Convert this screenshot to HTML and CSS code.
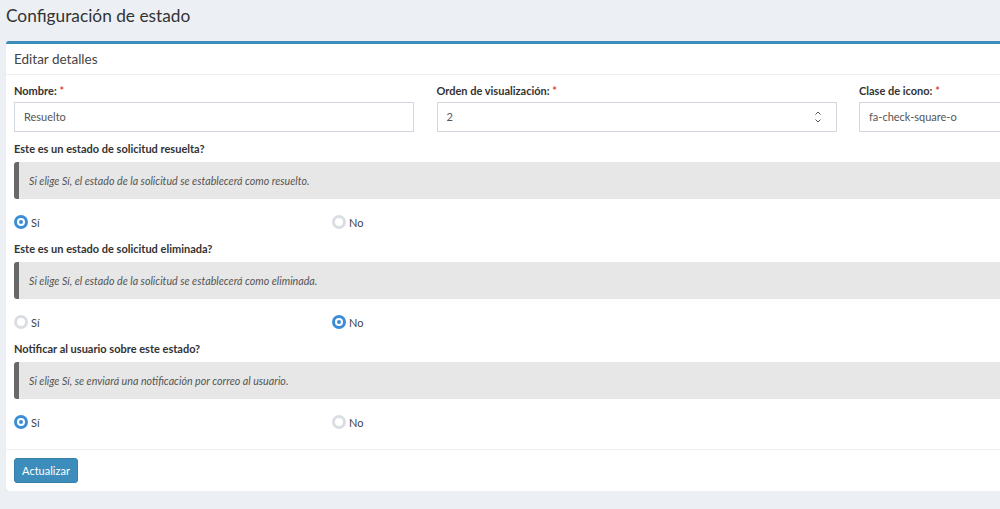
FILE: index.html
```html
<!DOCTYPE html>
<html lang="es">
<head>
<meta charset="utf-8">
<title>Configuración de estado</title>
<link rel="stylesheet" href="styles.css">
</head>
<body>
<div class="page">
  <h1 class="title">Configuración de estado</h1>
  <div class="box">
    <div class="box-header">Editar detalles</div>
    <div class="box-body">
      <div class="fields">
        <div class="field">
          <div class="label">Nombre: <span class="req">*</span></div>
          <div class="input">Resuelto</div>
        </div>
        <div class="field">
          <div class="label">Orden de visualización: <span class="req">*</span></div>
          <div class="input">2
            <svg class="spin" width="8" height="14" viewBox="0 0 8 14"><path d="M1.5 4.5 L4 2 L6.5 4.5 M1.5 9.5 L4 12 L6.5 9.5" fill="none" stroke="#555" stroke-width="1"/></svg>
          </div>
        </div>
        <div class="field">
          <div class="label">Clase de icono: <span class="req">*</span></div>
          <div class="input">fa-check-square-o</div>
        </div>
      </div>

      <div class="section">
        <div class="label">Este es un estado de solicitud resuelta?</div>
        <div class="callout">Si elige Sí, el estado de la solicitud se establecerá como resuelto.</div>
        <div class="radios">
          <div class="radio"><span class="dot on"></span>Sí</div>
          <div class="radio"><span class="dot"></span>No</div>
        </div>
      </div>

      <div class="section">
        <div class="label">Este es un estado de solicitud eliminada?</div>
        <div class="callout">Si elige Sí, el estado de la solicitud se establecerá como eliminada.</div>
        <div class="radios">
          <div class="radio"><span class="dot"></span>Sí</div>
          <div class="radio"><span class="dot on"></span>No</div>
        </div>
      </div>

      <div class="section">
        <div class="label">Notificar al usuario sobre este estado?</div>
        <div class="callout">Si elige Sí, se enviará una notificación por correo al usuario.</div>
        <div class="radios">
          <div class="radio"><span class="dot on"></span>Sí</div>
          <div class="radio"><span class="dot"></span>No</div>
        </div>
      </div>
    </div>
    <div class="box-footer">
      <button class="btn">Actualizar</button>
    </div>
  </div>
</div>
</body>
</html>
```

FILE: styles.css
```css
html, body {
  margin: 0;
  padding: 0;
  background: #ecf0f5;
  overflow: hidden;
  font-family: "Lato", "Liberation Sans", sans-serif;
  color: #333;
}
.page {
  padding: 0 6px;
  width: 988px;
}
.title {
  margin: 0;
  height: 41px;
  padding-top: 4px;
  box-sizing: border-box;
  font-size: 17.3px;
  font-weight: 400;
  line-height: 24px;
  color: #333;
}
.box {
  width: 1290px;
  background: #fff;
  border-top: 3px solid #3c8dbc;
  border-radius: 3px;
  box-shadow: 0 1px 1px rgba(0,0,0,0.12);
}
.box-header {
  height: 30px;
  line-height: 30px;
  padding: 0 8px;
  font-size: 13.5px;
  color: #444;
  border-bottom: 1px solid #f0f0f0;
}
.box-body {
  padding: 9px 8px 19px;
}
.fields {
  display: grid;
  grid-template-columns: 400px 400px 400px;
  column-gap: 22.5px;
}
.label {
  font-size: 11px;
  font-weight: 700;
  line-height: 14px;
  height: 14px;
  color: #333;
}
.req {
  color: #dd4b39;
}
.input {
  margin-top: 4px;
  height: 30px;
  box-sizing: border-box;
  border: 1px solid #d2d6de;
  padding: 0 9px;
  font-size: 11px;
  line-height: 28px;
  color: #555;
  display: flex;
  justify-content: space-between;
  align-items: center;
}
.spin {
  margin-right: 5px;
}
.section {
  margin-top: 10px;
}
.section + .section {
  margin-top: 12px;
}
.callout {
  margin-top: 6px;
  height: 37px;
  box-sizing: border-box;
  background: #e7e7e7;
  border-left: 5px solid #686868;
  border-radius: 3px;
  padding-left: 10px;
  line-height: 37px;
  font-size: 10.7px;
  font-style: italic;
  color: #555;
}
.radios {
  margin-top: 15px;
  display: grid;
  grid-template-columns: 318px 200px;
  height: 16px;
  align-items: center;
}
.radio {
  display: flex;
  align-items: center;
  font-size: 11px;
  color: #444;
}
.dot {
  width: 14px;
  height: 14px;
  box-sizing: border-box;
  border-radius: 50%;
  border: 3px solid #dadee3;
  background: #fff;
  margin-right: 3px;
  position: relative;
}
.dot.on {
  border-color: #3c8dd8;
}
.dot.on::after {
  content: "";
  position: absolute;
  left: 2px;
  top: 2px;
  width: 4px;
  height: 4px;
  border-radius: 50%;
  background: #3c8dd8;
}
.box-footer {
  border-top: 1px solid #f0f0f0;
  padding: 8px 8px 8px;
}
.btn {
  display: block;
  width: 64px;
  height: 25px;
  background: #3c8dbc;
  border: 1px solid #367fa9;
  border-radius: 3px;
  color: #fff;
  font-family: "Lato", "Liberation Sans", sans-serif;
  font-size: 11px;
  padding: 0;
}
```
